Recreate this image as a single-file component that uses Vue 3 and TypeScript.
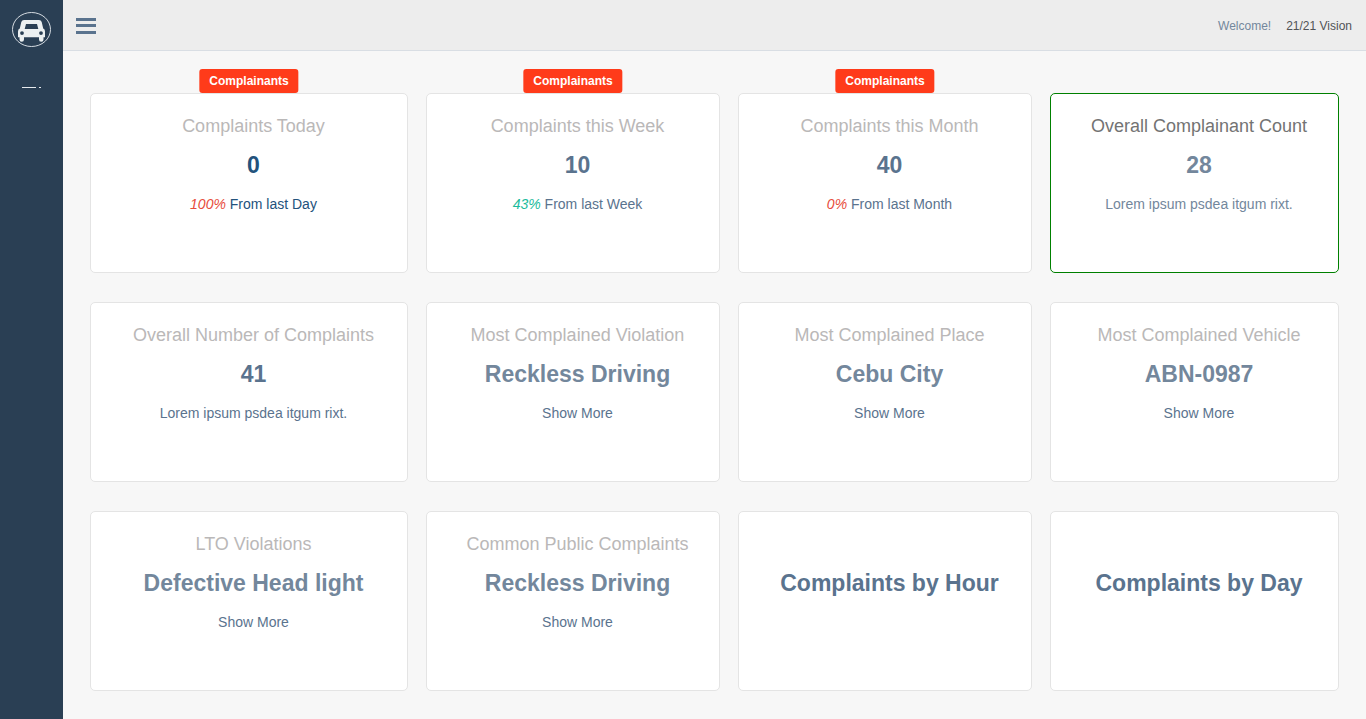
<script setup lang="ts">
interface Card {
  title?: string
  value: string
  note?: string
  percent?: string
  trend?: 'up' | 'down'
  badge?: boolean
  link?: 'card' | 'note'
  state?: 'active' | 'outlined'
}

const cards: Card[] = [
  { title: 'Complaints Today', value: '0', percent: '100%', trend: 'down', note: 'From last Day', badge: true, link: 'card', state: 'active' },
  { title: 'Complaints this Week', value: '10', percent: '43%', trend: 'up', note: 'From last Week', badge: true, link: 'card' },
  { title: 'Complaints this Month', value: '40', percent: '0%', trend: 'down', note: 'From last Month', badge: true, link: 'card' },
  { title: 'Overall Complainant Count', value: '28', note: 'Lorem ipsum psdea itgum rixt.', state: 'outlined' },
  { title: 'Overall Number of Complaints', value: '41', note: 'Lorem ipsum psdea itgum rixt.', link: 'card' },
  { title: 'Most Complained Violation', value: 'Reckless Driving', note: 'Show More', link: 'note' },
  { title: 'Most Complained Place', value: 'Cebu City', note: 'Show More', link: 'note' },
  { title: 'Most Complained Vehicle', value: 'ABN-0987', note: 'Show More', link: 'note' },
  { title: 'LTO Violations', value: 'Defective Head light', note: 'Show More', link: 'note' },
  { title: 'Common Public Complaints', value: 'Reckless Driving', note: 'Show More', link: 'note' },
  { value: 'Complaints by Hour', link: 'card' },
  { value: 'Complaints by Day', link: 'card' },
]
</script>

<template>
  <div class="shell">
    <aside class="sidebar">
      <a class="logo" href="#" aria-label="Home">
        <svg width="39" height="36" viewBox="0 0 39 36">
          <ellipse cx="19.500" cy="18.500" rx="19" ry="17" fill="none" stroke="#d5dbe1" stroke-width="1" />
          <path
            fill="#ecf0f1"
            fill-rule="evenodd"
            d="M12 9H27Q29 9 29.700 11L31.200 17.500Q33 18 33 20.500V26.300H31.500V28.500Q31.500 30.700 29.300 30.700Q27 30.700 27 28.500V26.300H12V28.500Q12 30.700 9.700 30.700Q7.500 30.700 7.500 28.500V26.300H6V20.500Q6 18 7.800 17.500L9.300 11Q10 9 12 9ZM14 13L12.700 18H26.300L25 13ZM10 20.200A1.900 1.900 0 1 0 10 24A1.900 1.900 0 0 0 10 20.200ZM29 20.200A1.900 1.900 0 1 0 29 24A1.900 1.900 0 0 0 29 20.200Z"
          />
        </svg>
      </a>
      <svg class="divider" width="19" height="1" viewBox="0 0 19 1" aria-hidden="true">
        <path fill="#e6eaee" d="M0 0H14V1H0ZM17 0H19V1H17Z" />
      </svg>
    </aside>

    <div class="page">
      <header class="topbar">
        <button class="toggle" type="button" aria-label="Toggle menu">
          <svg width="20" height="16" viewBox="0 0 20 16">
            <path fill="#5a738e" d="M0 0H20V3H0ZM0 6H20V9H0ZM0 13H20V16H0Z" />
          </svg>
        </button>
        <div class="user">
          <span>Welcome!</span>
          <a href="#">21/21 Vision</a>
        </div>
      </header>

      <main class="grid">
        <section v-for="(card, i) in cards" :key="i" class="card" :class="card.state">
          <span v-if="card.badge" class="badge">Complainants</span>
          <h3 class="title">{{ card.title }}</h3>
          <component :is="card.link === 'card' ? 'a' : 'div'" class="body" :href="card.link === 'card' ? '#' : undefined">
            <strong class="value">{{ card.value }}</strong>
            <component
              :is="card.link === 'note' ? 'a' : 'span'"
              v-if="card.note"
              class="note"
              :href="card.link === 'note' ? '#' : undefined"
            ><i v-if="card.percent" :class="card.trend">{{ card.percent }}</i> {{ card.note }}</component>
          </component>
        </section>
      </main>
    </div>
  </div>
</template>

<style>
body {
  background: #f7f7f7;
}
</style>

<style scoped>
.shell {
  display: flex;
  min-height: 100vh;
  font-family: "Liberation Sans", Arial, sans-serif;
  font-size: 14px;
  line-height: 20px;
  color: #73879c;
}

a {
  color: #5a738e;
  text-decoration: none;
}

.sidebar {
  flex: 0 0 63px;
  box-sizing: border-box;
  padding-top: 11px;
  background: #2a3f54;
}

.logo,
.divider {
  display: block;
  width: fit-content;
  margin: 0 auto;
}

.logo svg {
  display: block;
}

.divider {
  margin-top: 40px;
}

.page {
  flex: 1;
  min-width: 0;
}

.topbar {
  display: flex;
  align-items: center;
  justify-content: space-between;
  box-sizing: border-box;
  height: 51px;
  padding: 2px 14px 0 13px;
  background: #ededed;
  border-bottom: 1px solid #d9dee4;
}

.toggle {
  display: block;
  padding: 0;
  border: 0;
  background: none;
  cursor: pointer;
}

.toggle svg {
  display: block;
}

.user {
  display: flex;
  gap: 15px;
  font-size: 12px;
}

.user a {
  color: #515356;
}

.grid {
  display: grid;
  grid-template-columns: 318fr 294fr 294fr 289fr;
  gap: 29px 18px;
  padding: 42px 27px 28px;
}

.card {
  position: relative;
  box-sizing: border-box;
  min-height: 180px;
  padding: 22px 0 20px 9px;
  border: 1px solid #e4e4e4;
  border-radius: 5px;
  background: #fff;
  text-align: center;
}

.badge {
  position: absolute;
  bottom: 100%;
  left: 50%;
  transform: translateX(-50%);
  margin-bottom: 1px;
  padding: 0 10px;
  border-radius: 3px;
  background: #ff3b1a;
  color: #fff;
  font-size: 12px;
  font-weight: 700;
  line-height: 24px;
}

.title {
  min-height: 20px;
  margin: 0 0 16px;
  color: #bab8b8;
  font-size: 18px;
  font-weight: 400;
}

.body,
.value,
.note {
  display: block;
}

.value {
  margin-bottom: 16px;
  font-size: 23px;
  line-height: 26px;
}

.up {
  color: #1abb9c;
}

.down {
  color: #e74c3c;
}

.active .body {
  color: #23527c;
}

.outlined {
  border-color: #008000;
}

.outlined .title {
  color: #737373;
}
</style>
